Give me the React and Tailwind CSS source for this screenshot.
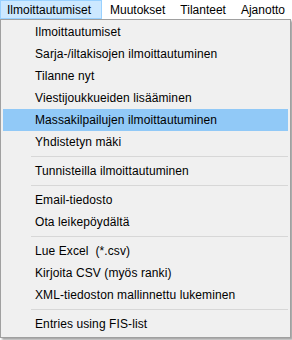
import React from "react";

const entries = [
  { label: "Ilmoittautumiset" },
  { label: "Sarja-/iltakisojen ilmoittautuminen" },
  { label: "Tilanne nyt" },
  { label: "Viestijoukkueiden lisääminen" },
  { label: "Massakilpailujen ilmoittautuminen", active: true },
  { label: "Yhdistetyn mäki" },
  { sep: true },
  { label: "Tunnisteilla ilmoittautuminen" },
  { sep: true },
  { label: "Email-tiedosto" },
  { label: "Ota leikepöydältä" },
  { sep: true },
  { label: "Lue Excel  (*.csv)" },
  { label: "Kirjoita CSV (myös ranki)" },
  { label: "XML-tiedoston mallinnettu lukeminen" },
  { sep: true },
  { label: "Entries using FIS-list" },
];

function MenuItem({ label, active }) {
  return (
    <div
      className={
        "h-[22px] flex items-center pl-[32px] whitespace-pre tracking-[0.1px] " +
        (active ? "bg-[#91c9f7]" : "")
      }
    >
      {label}
    </div>
  );
}

export default function App() {
  return (
    <div className="w-[292px] h-[340px] bg-white text-[12px] text-[#000] font-['Liberation_Sans',sans-serif] overflow-hidden">
      <div className="flex h-[19px] items-stretch">
        <div className="px-[6px] flex items-center bg-[#cce8ff] border border-[#99d1ff] w-[103px]">
          Ilmoittautumiset
        </div>
        <div className="pl-[8px] pr-[8px] flex items-center">Muutokset</div>
        <div className="pl-[7px] pr-[8px] flex items-center">Tilanteet</div>
        <div className="pl-[7px] pr-[7px] flex items-center">Ajanotto</div>
      </div>
      <div className="w-[291px] bg-[#f0f0f0] border border-[#a0a0a0] pt-[1px] pb-[2px] px-[2px] shadow-[2px_2px_2px_rgba(0,0,0,0.35)]">
        {entries.map((e, i) =>
          e.sep ? (
            <div key={i} className="h-[7px] flex items-center pl-[28px]">
              <div className="h-px w-full bg-[#d7d7d7]" />
            </div>
          ) : (
            <MenuItem key={i} label={e.label} active={e.active} />
          )
        )}
      </div>
    </div>
  );
}
